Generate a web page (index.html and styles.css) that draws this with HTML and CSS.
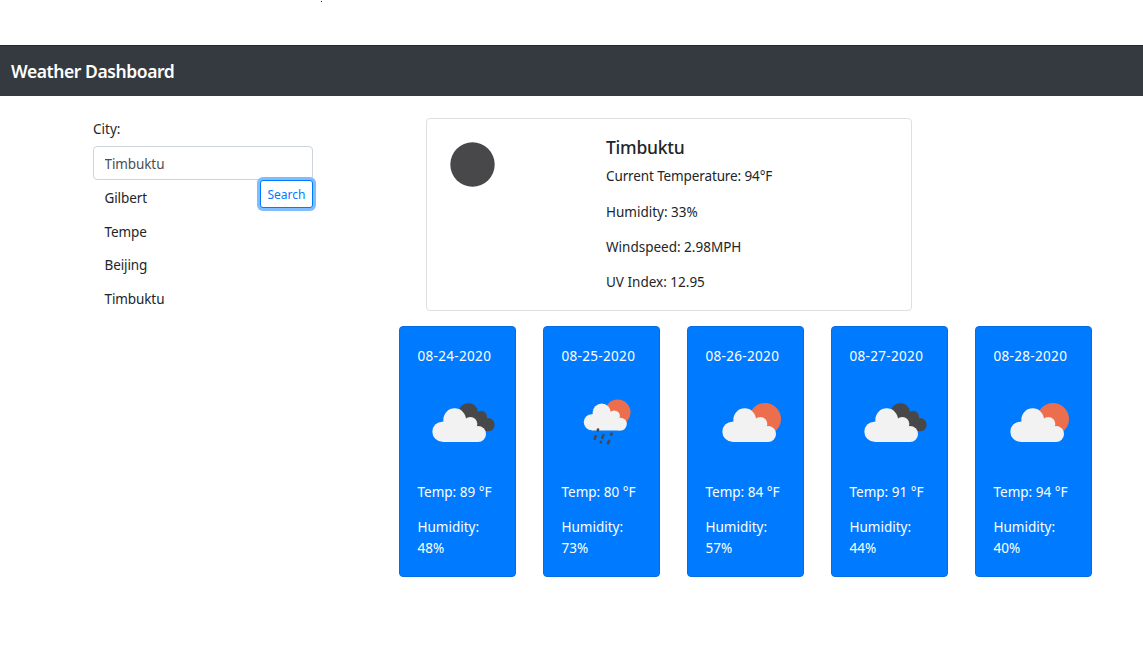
FILE: index.html
```html
<!DOCTYPE html>
<html lang="en">
<head>
<meta charset="utf-8">
<title>Weather Dashboard</title>
<link rel="stylesheet" href="styles.css">
</head>
<body>
<div class="top-strip"><span class="speck"></span></div>
<header class="navbar"><h1 class="brand">Weather Dashboard</h1></header>
<main class="layout">
  <aside class="sidebar">
    <label class="label" for="city">City:</label>
    <input class="input" id="city" type="text" value="Timbuktu">
    <div class="history-row">
      <ul class="history"><li>Gilbert</li><li>Tempe</li><li>Beijing</li><li>Timbuktu</li></ul>
      <button class="search">Search</button>
    </div>
  </aside>
  <div class="content">
    <section class="current">
      <svg class="moon" viewBox="0 0 45 45"><circle cx="22.5" cy="22.5" r="22.2" fill="#48484a"/></svg>
      <div class="details">
        <h2 class="city-name">Timbuktu</h2>
        <p class="tight">Current Temperature: 94°F</p>
        <p>Humidity: 33%</p>
        <p>Windspeed: 2.98MPH</p>
        <p>UV Index: 12.95</p>
      </div>
    </section>
    <svg class="defs" width="0" height="0">
      <defs>
        <g id="cloud" fill="#f2f2f2">
          <circle cx="157" cy="335" r="30"/><circle cx="194" cy="299" r="34"/><circle cx="241" cy="312" r="21"/><circle cx="264" cy="342" r="24"/>
          <path d="M157 305L194 298L241 312L264 342V366H157Z"/>
        </g>
        <g id="dark-cloud" fill="#48484a">
          <circle cx="235" cy="278" r="29"/><circle cx="273" cy="290" r="18"/><circle cx="294" cy="314" r="20"/>
          <path d="M235 278L273 290L294 314V334L240 320Z"/>
        </g>
      </defs>
    </svg>
    <section class="forecast">
      <article class="day">
        <p class="date">08-24-2020</p>
        <svg class="icon" viewBox="120 231 210 150"><use href="#dark-cloud"/><use href="#cloud"/></svg>
        <p>Temp: 89 °F</p><p class="humidity">Humidity: 48%</p>
      </article>
      <article class="day">
        <p class="date">08-25-2020</p>
        <svg class="icon" viewBox="102 231 210 150">
          <circle cx="233" cy="277" r="38.5" fill="#ec6e4c"/>
          <use href="#cloud" transform="translate(29.5 38) scale(.802)"/>
          <g stroke="#48484a" stroke-width="8" stroke-linecap="round">
            <path d="M174 329L173.500 331M167 349L164 356M190 346L187 353M215 341L213 344M183 366L182 367M207 363L204 370"/>
          </g>
        </svg>
        <p>Temp: 80 °F</p><p class="humidity">Humidity: 73%</p>
      </article>
      <article class="day">
        <p class="date">08-26-2020</p>
        <svg class="icon" viewBox="114 231 210 150"><circle cx="255" cy="297" r="48" fill="#ec6e4c"/><use href="#cloud"/></svg>
        <p>Temp: 84 °F</p><p class="humidity">Humidity: 57%</p>
      </article>
      <article class="day">
        <p class="date">08-27-2020</p>
        <svg class="icon" viewBox="120 231 210 150"><use href="#dark-cloud"/><use href="#cloud"/></svg>
        <p>Temp: 91 °F</p><p class="humidity">Humidity: 44%</p>
      </article>
      <article class="day">
        <p class="date">08-28-2020</p>
        <svg class="icon" viewBox="114 231 210 150"><circle cx="255" cy="297" r="48" fill="#ec6e4c"/><use href="#cloud"/></svg>
        <p>Temp: 94 °F</p><p class="humidity">Humidity: 40%</p>
      </article>
    </section>
  </div>
</main>
</body>
</html>
```
FILE: styles.css
```css
* { box-sizing: border-box; }
body { margin: 0; background: #fff; color: #212529; font: 13.5px/21px "Noto Sans", sans-serif; }
h1, h2, p, ul { margin: 0; padding: 0; }
.top-strip { height: 45px; padding: 1px 0 0 321px; }
.speck { display: block; width: 1px; height: 1px; background: #1c1c50; }
.navbar { height: 51px; padding: 0 11px; display: flex; align-items: center; background: #343a40; border-top: 1px solid #24282c; }
.brand { color: #fff; font-size: 17.5px; line-height: 26px; font-weight: 600; letter-spacing: -.42px; padding-bottom: 1px; }
.layout { display: flex; }
.sidebar { width: 399px; padding: 22px 0 0 93px; }
.label { display: block; height: 28px; padding-top: 1px; }
.input { display: block; width: 220px; height: 34px; padding: 2px 10px 0 10.5px; border: 1px solid #ced4da; border-radius: 4px; background: #fff; color: #495057; font: inherit; letter-spacing: -.1px; }
.history-row { width: 220px; display: flex; justify-content: space-between; align-items: flex-start; }
.history { list-style: none; padding: 2px 0 0 11.5px; letter-spacing: -.1px; }
.history li { height: 33.7px; line-height: 33.7px; }
.search { width: 53px; height: 28px; padding: 2px 0 0; border: 1px solid #007bff; border-radius: 3px; background: #fff; color: #007bff; font: 12px/18px "Noto Sans", sans-serif; box-shadow: 0 0 0 3px #80bdff; }
.content { width: 693px; padding-top: 22px; }
.current { width: 486px; height: 193px; margin-left: 27px; padding: 18px 23px; display: flex; border: 1px solid #dfdfdf; border-radius: 4px; }
.moon { width: 45px; height: 45px; margin-top: 5px; }
.details { padding-left: 111px; display: flex; flex-direction: column; }
.city-name { font-size: 17.5px; line-height: 21px; font-weight: 500; letter-spacing: -.25px; margin-bottom: 8px; }
.details p { margin-bottom: 14px; }
.details .tight { letter-spacing: -.12px; margin-bottom: 15px; }
.defs { display: block; }
.forecast { display: flex; gap: 27px; padding-top: 15px; }
.day { width: 117px; height: 251px; padding: 19px 10px 0 17.5px; border: 1px solid #006fe6; border-radius: 4px; background: #007bff; color: #fff; }
.date { letter-spacing: .32px; }
.icon { display: block; width: 70px; height: 50px; margin: 30px 0 35px 12.5px; }
.humidity { width: 70px; margin-top: 14px; }
```
